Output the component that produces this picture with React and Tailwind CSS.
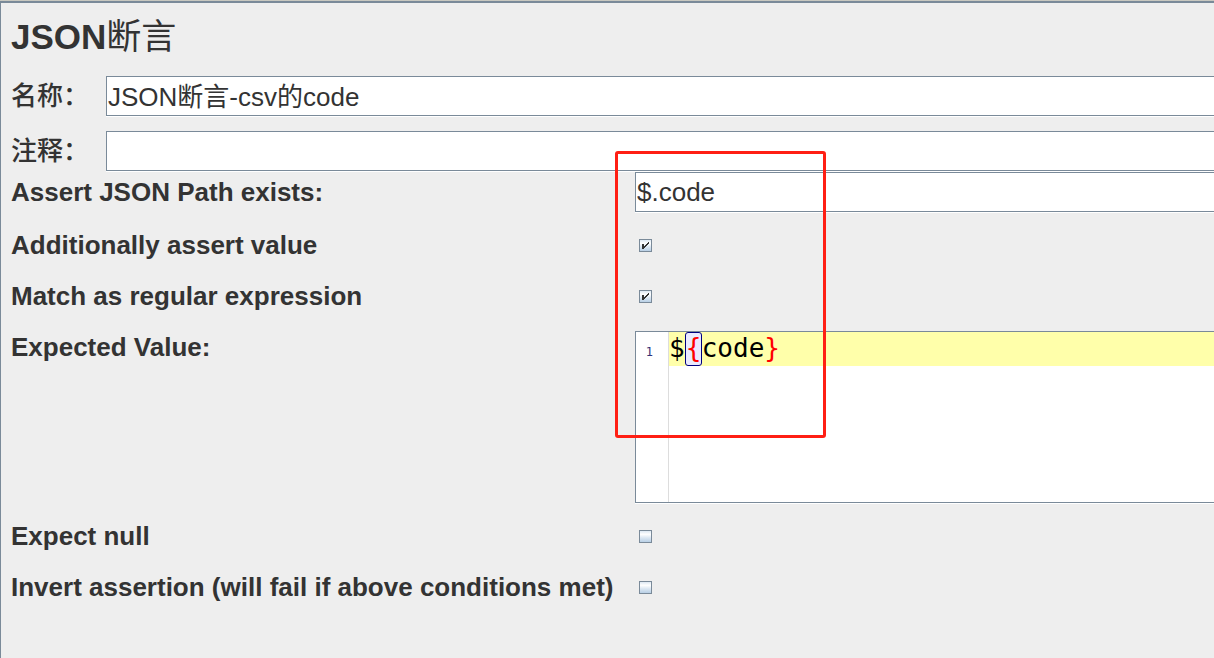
import { useState } from "react";

const CJK = "font-['Liberation_Sans','Noto_Sans_CJK_SC',sans-serif]";

function TextField({ id, value, onChange, padding = "px-px" }) {
  return (
    <input
      id={id}
      type="text"
      value={value}
      onChange={(e) => onChange(e.target.value)}
      className={`block h-10 w-full min-w-0 border border-r-0 border-[#7a8a99] bg-white text-[26px] leading-9 text-[#333] shadow-[0_1px_0_#fff] outline-none ${padding}`}
    />
  );
}

function NameRow({ id, label, value, onChange }) {
  return (
    <div className="flex items-center">
      <label htmlFor={id} className="w-[95px] shrink-0 text-[26px] leading-10 font-medium">
        {label}
      </label>
      <TextField id={id} value={value} onChange={onChange} padding="px-px pb-1" />
    </div>
  );
}

function CheckRow({ id, label, defaultChecked }) {
  return (
    <>
      <label htmlFor={id} className="flex h-[51px] items-center pb-0.5 text-[26px] leading-8 font-bold">
        {label}
      </label>
      <div className="flex items-center pl-1">
        <span className="grid size-[13px]">
          <input
            id={id}
            type="checkbox"
            defaultChecked={defaultChecked}
            className="peer col-start-1 row-start-1 size-[13px] appearance-none border border-[#7a8a99] bg-[linear-gradient(#dde8f3_0%,#fff_30%,#dde8f3_60%,#b8cfe5_100%)]"
          />
          <svg
            viewBox="0 0 13 13"
            shapeRendering="crispEdges"
            aria-hidden="true"
            className="pointer-events-none invisible col-start-1 row-start-1 size-[13px] fill-[#333] peer-checked:visible"
          >
            <path d="M3 5h2v5h-2zM5 7h1v2h-1zM6 6h1v2h-1zM7 5h1v2h-1zM8 4h1v2h-1zM9 3h1v2h-1z" />
          </svg>
        </span>
      </div>
    </>
  );
}

function Highlighted({ code }) {
  const open = code.indexOf("{");
  return [...code].map((ch, i) => {
    if (i === open) {
      return (
        <span key={i} className="inline-block h-[34px] w-[17px] rounded-[3px] border border-[#000080] bg-[#eaeaff] text-center align-top leading-[30px] text-[#f00]">
          {ch}
        </span>
      );
    }
    return (
      <span key={i} className={ch === "{" || ch === "}" ? "text-[#f00]" : "text-black"}>
        {ch}
      </span>
    );
  });
}

function CodeEditor({ id, value, onChange }) {
  return (
    <div className="flex h-[172px] border border-r-0 border-[#7a8a99] bg-white font-['DejaVu_Sans_Mono',monospace] shadow-[0_1px_0_#fff]">
      <div className="w-[33px] shrink-0 border-r border-[#ddd] pt-1 pr-[15px] text-right text-[12px] leading-8 text-[#333377]">
        1
      </div>
      <div className="relative min-w-0 grow text-[26px] leading-8">
        <div aria-hidden="true" className="h-[34px] bg-[#ffffaa] whitespace-pre">
          <Highlighted code={value} />
        </div>
        <textarea
          id={id}
          value={value}
          onChange={(e) => onChange(e.target.value)}
          spellCheck={false}
          className="absolute inset-0 block size-full resize-none bg-transparent text-transparent caret-black outline-none"
        />
      </div>
    </div>
  );
}

export default function App() {
  const [name, setName] = useState("JSON断言-csv的code");
  const [comment, setComment] = useState("");
  const [path, setPath] = useState("$.code");
  const [expected, setExpected] = useState("${code}");

  return (
    <main className={`relative min-h-screen overflow-hidden border-t border-[#c8c8c0] bg-[#eee] text-[#333] ${CJK}`}>
      <div className="min-h-screen border-t-2 border-l border-[#7a8a99] pl-[10px]">
        <h1 className="pt-[11px] pb-4 text-[35px] leading-[46px] font-bold">
          JSON<span className="font-normal">断言</span>
        </h1>

        <div className="flex flex-col gap-[15px]">
          <NameRow id="name" label="名称：" value={name} onChange={setName} />
          <NameRow id="comment" label="注释：" value={comment} onChange={setComment} />
        </div>

        <form className="mt-px grid grid-cols-[624px_1fr]">
          <label htmlFor="path" className="text-[26px] leading-10 font-bold">
            Assert JSON Path exists:
          </label>
          <div className="pb-2">
            <TextField id="path" value={path} onChange={setPath} />
          </div>

          <CheckRow id="assert-value" label="Additionally assert value" defaultChecked />
          <CheckRow id="regex" label="Match as regular expression" defaultChecked />

          <label htmlFor="expected" className="pt-[9px] text-[26px] leading-8 font-bold">
            Expected Value:
          </label>
          <div className="pt-[9px] pb-2">
            <CodeEditor id="expected" value={expected} onChange={setExpected} />
          </div>

          <CheckRow id="null" label="Expect null" />
          <CheckRow id="invert" label="Invert assertion (will fail if above conditions met)" />
        </form>
      </div>

      <div
        aria-hidden="true"
        className="pointer-events-none absolute top-[150px] left-[615px] h-[287px] w-[211px] rounded-[3px] border-3 border-[#ff1f14]"
      />
    </main>
  );
}
